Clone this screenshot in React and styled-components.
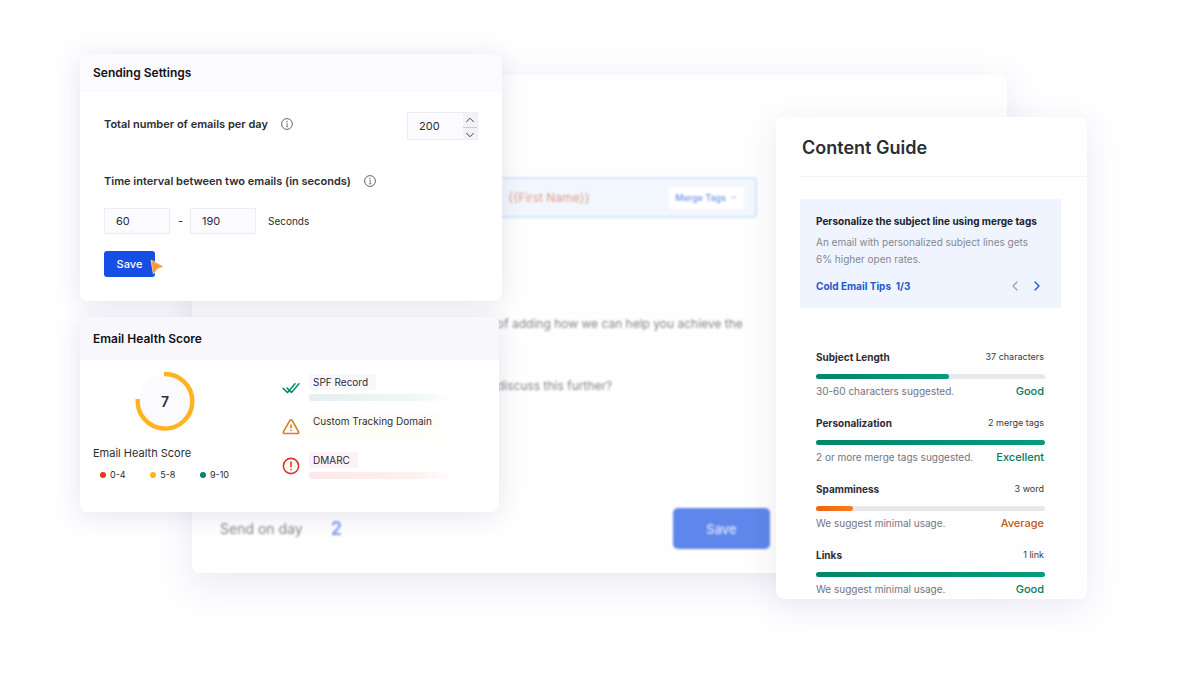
import React, { useState } from 'react'
import styled, { createGlobalStyle } from 'styled-components'
import { LuChevronLeft, LuChevronRight, LuChevronUp, LuChevronDown } from 'react-icons/lu'

const legend = [
  { label: '0-4', color: '#ee3124' },
  { label: '5-8', color: '#ffb41f' },
  { label: '9-10', color: '#04866a' },
]

const scores = [
  { name: 'Subject Length', count: '37 characters', hint: '30-60 characters suggested.', verdict: 'Good', value: 58 },
  { name: 'Personalization', count: '2 merge tags', hint: '2 or more merge tags suggested.', verdict: 'Excellent', value: 100 },
  { name: 'Spamminess', count: '3 word', hint: 'We suggest minimal usage.', verdict: 'Average', value: 16, warn: true },
  { name: 'Links', count: '1 link', hint: 'We suggest minimal usage.', verdict: 'Good', value: 100 },
]

function InfoIcon() {
  return (
    <svg width="12" height="12" viewBox="0 0 12 12" fill="none" stroke="#55555c" aria-hidden="true">
      <circle cx="6" cy="6" r="5.4" strokeWidth="0.9" />
      <path d="M5.2 5.2H6.2V8.6M5 8.7H7.3" strokeWidth="0.7" />
      <circle cx="6" cy="3.4" r="0.6" fill="#55555c" stroke="none" />
    </svg>
  )
}

function DoubleCheckIcon() {
  return (
    <svg width="18" height="18" viewBox="0 0 18 18" fill="none" stroke="#04866a" strokeWidth="1.5" strokeLinecap="round" strokeLinejoin="round" aria-hidden="true">
      <path d="M1 9.2L5.6 13.6L13 4.8" />
      <path d="M5 9L9.4 13.4L17 4.8" />
    </svg>
  )
}

function WarningIcon() {
  return (
    <svg width="18" height="18" viewBox="0 0 18 18" fill="none" stroke="#d5801c" strokeWidth="1.6" strokeLinecap="round" strokeLinejoin="round" aria-hidden="true">
      <path d="M7.9 2.4L1.5 13.6Q0.9 15.5 2.6 15.5H15.4Q17.1 15.5 16.5 13.6L10.1 2.4Q9 1 7.9 2.4Z" />
      <path d="M9 7V9.8M9 12.4V12.5" />
    </svg>
  )
}

function AlertIcon() {
  return (
    <svg width="18" height="18" viewBox="0 0 18 18" fill="none" stroke="#d93a2b" strokeWidth="1.6" strokeLinecap="round" aria-hidden="true">
      <circle cx="9" cy="9" r="7.6" />
      <path d="M9 5V9.8M9 12.6V12.7" />
    </svg>
  )
}

function SendingSettings() {
  const [perDay, setPerDay] = useState(200)
  const [min, setMin] = useState(60)
  const [max, setMax] = useState(190)

  return (
    <Card>
      <CardHeader>
        <h2>Sending Settings</h2>
      </CardHeader>
      <SettingsBody>
        <SettingRow>
          <FieldLabel htmlFor="per-day">Total number of emails per day</FieldLabel>
          <InfoIcon />
          <Stepper>
            <input id="per-day" type="text" inputMode="numeric" value={perDay} onChange={(e) => setPerDay(Number(e.target.value) || 0)} />
            <div className="arrows">
              <button type="button" aria-label="Increase" onClick={() => setPerDay(perDay + 1)}>
                <LuChevronUp />
              </button>
              <button type="button" aria-label="Decrease" onClick={() => setPerDay(perDay - 1)}>
                <LuChevronDown />
              </button>
            </div>
          </Stepper>
        </SettingRow>
        <SettingRow>
          <FieldLabel htmlFor="interval-min">Time interval between two emails (in seconds)</FieldLabel>
          <InfoIcon />
        </SettingRow>
        <IntervalRow>
          <SmallInput id="interval-min" type="text" value={min} onChange={(e) => setMin(e.target.value)} />
          <span className="dash">-</span>
          <SmallInput aria-label="Maximum interval" type="text" value={max} onChange={(e) => setMax(e.target.value)} />
          <span className="unit">Seconds</span>
        </IntervalRow>
        <SaveWrapper>
          <SaveButton type="button">Save</SaveButton>
          <svg width="16" height="18" viewBox="0 0 16 18" aria-hidden="true">
            <path d="M3 2L15 8.6L9.4 10.6L5.4 16Z" fill="#fb963a" stroke="#fdc795" strokeWidth="1" strokeLinejoin="round" />
          </svg>
        </SaveWrapper>
      </SettingsBody>
    </Card>
  )
}

function HealthScore() {
  return (
    <HealthCard>
      <CardHeader $tall>
        <h2>Email Health Score</h2>
      </CardHeader>
      <HealthBody>
        <Gauge>
          <div className="ring">
            <svg width="60" height="60" viewBox="0 0 60 60" fill="none" aria-hidden="true">
              <circle cx="30" cy="30" r="26" fill="#fbfaff" />
              <path d="M29 3A27.3 27.3 0 1 1 2.8 28" stroke="#ffb41f" strokeWidth="4.4" />
            </svg>
            <strong>7</strong>
          </div>
          <p>Email Health Score</p>
          <ul>
            {legend.map((item) => (
              <LegendItem key={item.label} $color={item.color}>{item.label}</LegendItem>
            ))}
          </ul>
        </Gauge>
        <Records>
          <Record $tint="#f7f8fb" $from="#e6eef0" $to="#eef9f4">
            <DoubleCheckIcon />
            <div><span>SPF Record</span></div>
          </Record>
          <Record $tint="#fffdf6" $from="#fffef4" $to="#fffef4">
            <WarningIcon />
            <div><span>Custom Tracking Domain</span></div>
          </Record>
          <Record $tint="#fdf1f5" $from="#fee7e8" $to="#fff0f0">
            <AlertIcon />
            <div><span>DMARC</span></div>
          </Record>
        </Records>
      </HealthBody>
    </HealthCard>
  )
}

function ContentGuide() {
  return (
    <Guide>
      <GuideTitle>Content Guide</GuideTitle>
      <Tip>
        <h3>Personalize the subject line using merge tags</h3>
        <p>An email with personalized subject lines gets 6% higher open rates.</p>
        <TipFooter>
          <a href="#tips">Cold Email Tips&nbsp; 1/3</a>
          <div>
            <TipArrow type="button" aria-label="Previous tip" $muted><LuChevronLeft /></TipArrow>
            <TipArrow type="button" aria-label="Next tip"><LuChevronRight /></TipArrow>
          </div>
        </TipFooter>
      </Tip>
      <ScoreList>
        {scores.map((score) => (
          <Score key={score.name} $warn={score.warn}>
            <div className="line">
              <h3>{score.name}</h3>
              <small>{score.count}</small>
            </div>
            <Track $warn={score.warn}>
              <div style={{ width: `${score.value}%` }} />
            </Track>
            <div className="line">
              <p>{score.hint}</p>
              <b>{score.verdict}</b>
            </div>
          </Score>
        ))}
      </ScoreList>
    </Guide>
  )
}

function Composer() {
  return (
    <ComposerCard>
      <ComposerMain>
        <SubjectField>
          <span>{'{{First Name}}'}</span>
          <button type="button">Merge Tags <LuChevronDown /></button>
        </SubjectField>
        <Message>
          <p>of adding how we can help you achieve the</p>
          <p>discuss this further?</p>
        </Message>
      </ComposerMain>
      <ComposerFooter>
        <span>Send on day</span>
        <strong>2</strong>
        <button type="button">Save</button>
      </ComposerFooter>
    </ComposerCard>
  )
}

export default function App() {
  return (
    <>
      <GlobalStyle />
      <Page>
        <Scene>
          <Composer />
          <LeftColumn>
            <SendingSettings />
            <HealthScore />
          </LeftColumn>
          <ContentGuide />
        </Scene>
      </Page>
    </>
  )
}

const GlobalStyle = createGlobalStyle`
  *{
    box-sizing: border-box;
  }
  body{
    margin: 0;
    background: #fff;
    color: #2c2c34;
    font-family: Inter, "Liberation Sans", sans-serif;
    font-size: 11px;
  }
  h1, h2, h3, p, ul{
    margin: 0;
    padding: 0;
  }
  button, input{
    font: inherit;
    color: inherit;
  }
  button{
    padding: 0;
    border: none;
    background: none;
    cursor: pointer;
  }
`;

const Page = styled.main`
  margin: 12px 0 40px;
  padding: 42px 113px 40px 80px;
  background: #fefdff;
`;

// the three panels share one grid row and overlap through their columns
const Scene = styled.div`
  display: grid;
  grid-template-columns: 112px 310px 1fr 231px 80px;
  align-items: start;
`;

const LeftColumn = styled.div`
  grid-area: 1 / 1 / 2 / 3;
  z-index: 1;
  display: flex;
  flex-direction: column;
  gap: 16px;
`;

const Card = styled.section`
  background: #fff;
  border-radius: 8px;
  box-shadow: 0 3px 24px rgba(60, 60, 120, 0.12);
`;

const HealthCard = styled(Card)`
  margin-right: 3px;
`;

const CardHeader = styled.header`
  display: flex;
  align-items: center;
  height: ${({ $tall }) => ($tall ? '43px' : '38px')};
  padding: 0 13px;
  border-radius: 8px 8px 0 0;
  background: ${({ $tall }) => ($tall ? '#f7f7fc' : '#fafaff')};
  h2{
    font-size: 12px;
    line-height: 16px;
    font-weight: 600;
    color: #111116;
  }
`;

const SettingsBody = styled.div`
  padding: 20px 24px 24px;
`;

const SettingRow = styled.div`
  display: flex;
  align-items: flex-start;
  & + &{
    margin-top: 29px;
  }
  > svg{
    margin-top: 6px;
  }
`;

const FieldLabel = styled.label`
  margin-right: 13px;
  font-weight: 600;
  line-height: 24px;
`;

const Stepper = styled.div`
  display: flex;
  width: 71px;
  height: 28px;
  margin-left: auto;
  border: 1px solid #ececf1;
  background: #fafaff;
  input{
    flex: 1;
    min-width: 0;
    padding: 0 0 0 11px;
    border: none;
    background: none;
  }
  .arrows{
    display: flex;
    flex-direction: column;
    width: 14px;
    background: #f3f3f6;
  }
  button{
    flex: 1;
    display: flex;
    align-items: center;
    justify-content: center;
  }
  button + button{
    border-top: 1px solid #cfcfd6;
  }
  svg{
    width: 14px;
    height: 14px;
    flex: none;
    stroke-width: 1.5;
  }
`;

const IntervalRow = styled.div`
  display: flex;
  align-items: center;
  gap: 8px;
  margin-top: 15px;
  .dash{
    width: 4px;
  }
  .unit{
    margin-left: 4px;
    font-size: 10px;
  }
`;

const SmallInput = styled.input`
  width: 66px;
  height: 26px;
  padding: 0 11px;
  border: 1px solid #ececf1;
  border-radius: 0;
  background: #fafaff;
`;

const SaveWrapper = styled.div`
  position: relative;
  display: flex;
  margin-top: 17px;
  svg{
    position: absolute;
    left: 44px;
    top: 7px;
  }
`;

const SaveButton = styled.button`
  width: 51px;
  height: 26px;
  border-radius: 3px;
  background: #154fe6;
  color: #fff;
  font-weight: 500;
`;

const HealthBody = styled.div`
  display: flex;
  height: 152px;
  padding: 11px 13px;
`;

const Gauge = styled.div`
  display: flex;
  flex-direction: column;
  width: 144px;
  .ring{
    position: relative;
    align-self: center;
    width: 60px;
    height: 60px;
  }
  strong{
    position: absolute;
    inset: 0;
    display: flex;
    align-items: center;
    justify-content: center;
    font-size: 14px;
    font-weight: 600;
  }
  p{
    margin-top: 14px;
    line-height: 16px;
  }
  ul{
    display: flex;
    justify-content: space-between;
    margin-top: 6px;
    padding: 0 8px 0 7px;
    list-style: none;
  }
`;

const LegendItem = styled.li`
  display: flex;
  align-items: center;
  gap: 4px;
  font-size: 9px;
  line-height: 16px;
  &::before{
    content: '';
    width: 6px;
    height: 6px;
    border-radius: 50%;
    background: ${({ $color }) => $color};
  }
`;

const Records = styled.div`
  display: flex;
  flex-direction: column;
  gap: 10px;
  flex: 1;
  margin: 2px 0 0 45px;
`;

const Record = styled.div`
  display: flex;
  align-items: center;
  gap: 9px;
  height: 29px;
  font-size: 10px;
  line-height: 16px;
  div{
    flex: 1;
    max-width: 148px;
  }
  span{
    padding: 2px 8px 2px 4px;
    background: ${({ $tint }) => $tint};
  }
  div::after{
    content: '';
    display: block;
    height: 7px;
    margin-top: 4px;
    border-radius: 3px;
    background: linear-gradient(90deg, ${({ $from }) => $from}, ${({ $to }) => $to} 70%, transparent);
  }
`;

const ComposerCard = styled.section`
  grid-area: 1 / 2 / 2 / 5;
  margin-top: 21px;
  padding: 102px 0 24px;
  border-radius: 8px;
  background: #fefefe;
  box-shadow: 0 10px 36px rgba(60, 60, 130, 0.1);
`;

const ComposerMain = styled.div`
  width: 565px;
  height: 331px;
`;

const SubjectField = styled.div`
  display: flex;
  align-items: center;
  justify-content: space-between;
  height: 41px;
  margin-left: 28px;
  padding: 0 11px 0 286px;
  border: 2px solid #d9e6fb;
  border-radius: 4px;
  background: #f2f7fe;
  filter: blur(1px);
  color: #dd9d86;
  font-size: 12px;
  button{
    display: flex;
    align-items: center;
    gap: 3px;
    height: 22px;
    padding: 0 6px;
    background: #fff;
    color: #6c90e8;
    font-size: 9px;
    font-weight: 500;
  }
`;

const Message = styled.div`
  padding: 98px 0 0 305px;
  color: #86868c;
  filter: blur(1px);
  font-size: 12px;
  line-height: 16px;
  white-space: nowrap;
  p + p{
    margin-top: 46px;
  }
`;

const ComposerFooter = styled.footer`
  display: flex;
  align-items: center;
  width: 578px;
  height: 41px;
  padding-left: 28px;
  color: #88888c;
  font-size: 14px;
  filter: blur(1px);
  strong{
    margin-left: 28px;
    color: #7d9df0;
    font-size: 18px;
    font-weight: 600;
  }
  button{
    width: 97px;
    height: 41px;
    margin-left: auto;
    border-radius: 5px;
    background: #5f86ea;
    color: #dfe8fc;
    font-size: 13px;
    font-weight: 500;
  }
`;

const Guide = styled.aside`
  grid-area: 1 / 4 / 2 / 6;
  z-index: 1;
  height: 482px;
  margin-top: 63px;
  overflow: hidden;
  border-radius: 8px;
  background: #fff;
  box-shadow: 0 8px 32px rgba(60, 60, 130, 0.09);
`;

const GuideTitle = styled.h1`
  height: 60px;
  margin-left: 24px;
  padding: 19px 2px 0;
  border-bottom: 1px solid #f3f3f6;
  font-size: 18px;
  line-height: 24px;
  font-weight: 600;
`;

const Tip = styled.section`
  height: 109px;
  margin: 22px 26px 0 24px;
  padding: 14px 15px 0 16px;
  background: #eff4ff;
  h3{
    font-size: 10px;
    line-height: 16px;
    font-weight: 700;
    color: #1b2230;
    white-space: nowrap;
  }
  p{
    margin-top: 5px;
    font-size: 10px;
    line-height: 17px;
    color: #84878f;
  }
`;

const TipFooter = styled.div`
  display: flex;
  align-items: center;
  justify-content: space-between;
  margin-top: 10px;
  padding-right: 1px;
  line-height: 16px;
  a{
    color: #1f58cd;
    font-size: 10px;
    font-weight: 700;
    text-decoration: none;
  }
  div{
    display: flex;
    gap: 6px;
  }
`;

const TipArrow = styled.button`
  display: flex;
  color: ${({ $muted }) => ($muted ? '#a0a5b0' : '#1f58cd')};
  svg{
    width: 16px;
    height: 16px;
  }
`;

const ScoreList = styled.div`
  display: flex;
  flex-direction: column;
  gap: 16px;
  margin: 26px 26px 0 24px;
  padding: 15px 16px 0;
  background: #fefdff;
`;

const Score = styled.section`
  height: 50px;
  .line{
    display: flex;
    align-items: center;
    justify-content: space-between;
    padding-right: 1px;
    line-height: 16px;
  }
  h3{
    font-size: 10px;
    font-weight: 700;
  }
  small{
    font-size: 9px;
    color: #3a3a40;
  }
  p{
    font-size: 10px;
    color: #75757b;
  }
  b{
    font-weight: 500;
    color: ${({ $warn }) => ($warn ? '#c8540f' : '#067a5c')};
  }
`;

const Track = styled.div`
  height: 5px;
  margin: 9px 0 4px;
  border-radius: 3px;
  background: #e8e7eb;
  div{
    height: 100%;
    border-radius: 3px;
    background: ${({ $warn }) => ($warn ? 'linear-gradient(90deg, #ee6510, #fd7d1c)' : 'linear-gradient(90deg, #04866a, #079c7c)')};
  }
`;
